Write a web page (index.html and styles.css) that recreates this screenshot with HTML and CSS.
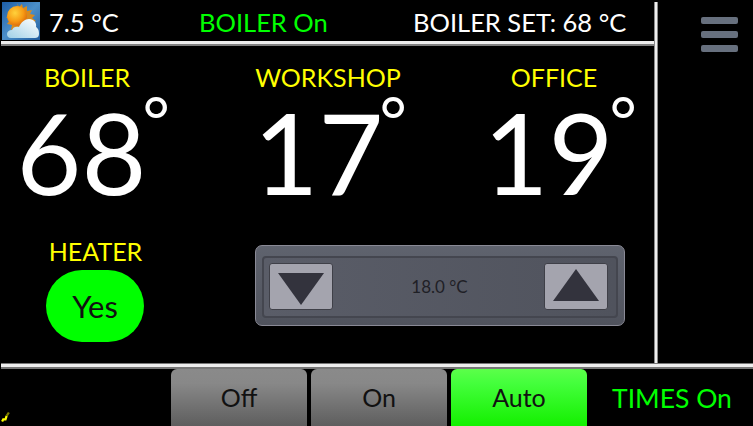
FILE: index.html
```html
<!DOCTYPE html>
<html>
<head>
    <title>Boiler</title>
    <meta charset="UTF-8">
    <link rel="stylesheet" href="styles.css">
</head>
<body>
<div class="screen">
    <div class="upper">
        <div class="main">
            <div class="header">
                <svg class="weather" viewBox="0 0 38 38">
                    <defs>
                        <linearGradient id="sky" x1="0" y1="0" x2="1" y2="1">
                            <stop offset="0" stop-color="#1d5da6"/>
                            <stop offset="0.5" stop-color="#4b8fc9"/>
                            <stop offset="1" stop-color="#1f5b9c"/>
                        </linearGradient>
                        <radialGradient id="sun" cx="0.4" cy="0.35" r="0.7">
                            <stop offset="0" stop-color="#ffd23c"/>
                            <stop offset="0.6" stop-color="#f79a14"/>
                            <stop offset="1" stop-color="#d8640a"/>
                        </radialGradient>
                        <linearGradient id="cloud" x1="1" y1="0" x2="0" y2="1">
                            <stop offset="0" stop-color="#ffffff"/>
                            <stop offset="1" stop-color="#a0d0e6"/>
                        </linearGradient>
                    </defs>
                    <rect width="38" height="38" fill="url(#sky)"/>
                    <path d="M15 1l2 4 3-3 1 4 4-2 0 5 5-1-2 4 5 1-3 3 4 3-4 2 2 4-5 0 0 4-4-2-2 4-3-3-3 3-1-4-5 1 1-5-5-1 3-4-4-3 5-1-1-5 5 1 1-4 3 2z" fill="#d98a1c"/>
                    <circle cx="15" cy="14" r="10" fill="url(#sun)"/>
                    <path d="M9 36C6 36 5 34 5 32C5 30 7 28 10 28C11 25 14 24 17 25C19 20 23 17 27 17C32 17 35 21 34 25C37 27 37 30 37 32C37 35 35 36 33 36Z" fill="url(#cloud)"/>
                </svg>
                <span class="outside">7.5 °C</span>
                <span class="boiler-state">BOILER On</span>
                <span class="boiler-set">BOILER SET: 68 °C</span>
            </div>
            <div class="rule-top"></div>
            <div class="readings">
                <div class="reading">
                    <div class="label">BOILER</div>
                    <div class="temp">68<span class="deg">°</span></div>
                </div>
                <div class="reading">
                    <div class="label">WORKSHOP</div>
                    <div class="temp temp-workshop">17<span class="deg">°</span></div>
                </div>
                <div class="reading">
                    <div class="label">OFFICE</div>
                    <div class="temp">19<span class="deg">°</span></div>
                </div>
            </div>
            <div class="controls">
                <div class="heater">
                    <div class="label">HEATER</div>
                    <div class="pill">Yes</div>
                </div>
                <div class="setpoint">
                    <div class="setpoint-inner">
                        <div class="step step-down"><svg viewBox="0 0 46 32"><path d="M0 0H46L23 32Z"/></svg></div>
                        <span class="setpoint-val">18.0 °C</span>
                        <div class="step step-up"><svg viewBox="0 0 46 32"><path d="M0 32H46L23 0Z"/></svg></div>
                    </div>
                </div>
            </div>
        </div>
        <div class="rule-side"></div>
        <div class="side">
            <div class="burger"><i></i><i></i><i></i></div>
        </div>
    </div>
    <div class="footer">
        <div class="rule-bottom"></div>
        <div class="tabs">
            <svg class="cursor" viewBox="0 0 8 10"><path d="M1 9L2 7 4 7 5 4" stroke="#ffff00" stroke-width="2" fill="none"/><path d="M5 4L7 1" stroke="#808000" stroke-width="2"/></svg>
            <div class="tab">Off</div>
            <div class="tab">On</div>
            <div class="tab tab-on">Auto</div>
            <span class="times">TIMES On</span>
        </div>
    </div>
</div>
</body>
</html>
```

FILE: styles.css
```css
html, body {
    margin: 0;
    background: #000;
}
.screen {
    width: 753px;
    height: 426px;
    overflow: hidden;
    display: flex;
    flex-direction: column;
    font-family: Lato, "Open Sans", sans-serif;
    color: #fff;
    background: #000;
}
.upper {
    display: flex;
    flex: none;
    height: 363px;
    padding-top: 2px;
    box-sizing: border-box;
}
.main {
    width: 653px;
    margin-left: 1px;
    display: flex;
    flex-direction: column;
}
.rule-side {
    width: 4px;
    background: linear-gradient(90deg, #8a8a8a 1px, #eee 1px, #eee 3px, #8a8a8a 3px);
}
.side {
    flex: 1;
    display: flex;
    justify-content: center;
    padding-left: 28px;
}
.burger {
    display: flex;
    flex-direction: column;
    gap: 7px;
    margin-top: 15px;
}
.burger i {
    display: block;
    width: 37px;
    height: 7px;
    border-radius: 2px;
    background: #67707e;
}
.header {
    height: 39px;
    display: flex;
    align-items: center;
    font-size: 25.5px;
    padding-left: 1px;
}
.rule-top {
    height: 5px;
    background: linear-gradient(#eee 3px, #808080 3px);
}
.weather {
    width: 38px;
    height: 38px;
    margin-top: -2px;
}
.outside {
    margin-left: 9px;
    width: 150px;
}
.boiler-state {
    color: #00ff00;
    width: 214px;
}
.boiler-set {
    color: #fff;
}
.readings {
    display: grid;
    grid-template-columns: 172px 310px 142px;
    margin-top: 16px;
}
.reading {
    text-align: center;
}
.label {
    color: #ffff00;
    font-size: 25px;
    line-height: 30px;
}
.temp {
    font-size: 112px;
    line-height: 120px;
    white-space: nowrap;
}
.temp-workshop {
    margin-right: 8px;
}
.deg {
    display: inline-block;
    width: 15px;
    margin-left: -4px;
    font-size: 66px;
    line-height: 0;
    vertical-align: 50px;
    text-align: left;
}
.controls {
    display: flex;
    margin-top: 24px;
}
.heater {
    width: 189px;
    text-align: center;
}
.pill {
    width: 98px;
    height: 72px;
    margin: 4px 0 0 45px;
    border-radius: 36px;
    background: #00ff00;
    color: #111;
    font-size: 31px;
    line-height: 72px;
}
.setpoint {
    width: 370px;
    height: 81px;
    margin-left: 65px;
    margin-top: 9px;
    box-sizing: border-box;
    padding: 10px 6px 7px;
    border-radius: 7px;
    background: linear-gradient(#5f636e, #50535d);
    border: 1px solid #8a8a96;
}
.setpoint-inner {
    height: 100%;
    display: flex;
    align-items: center;
    justify-content: space-between;
    box-sizing: border-box;
    padding: 0 8px 2px 5px;
    border: 2px solid #44464f;
    border-radius: 4px;
    background: linear-gradient(90deg, #5a5d68, #50535d);
}
.step {
    width: 64px;
    height: 47px;
    display: flex;
    align-items: center;
    justify-content: center;
    background: #a4a4ae;
    border: 1px solid #3f4048;
    border-radius: 3px;
    box-sizing: border-box;
}
.step svg {
    width: 46px;
    height: 32px;
    fill: #33333d;
}
.step-down {
    padding-top: 5px;
}
.step-up {
    padding-bottom: 3px;
}
.setpoint-val {
    color: #1f2026;
    font-size: 17px;
    margin-left: 2px;
}
.footer {
    flex: none;
    height: 63px;
    margin-left: 1px;
}
.rule-bottom {
    height: 6px;
    background: linear-gradient(#777 1px, #eee 1px, #eee 4px, #777 4px);
}
.tabs {
    height: 57px;
    display: flex;
    gap: 4px;
    position: relative;
}
.cursor {
    position: absolute;
    left: 0;
    bottom: 3px;
    width: 9px;
    height: 12px;
}
.tab {
    width: 136px;
    border-radius: 6px 6px 0 0;
    background: linear-gradient(#8a8a8a 0, #888 25%, #5e5e5e 100%);
    color: #111;
    font-size: 25px;
    line-height: 57px;
    text-align: center;
}
.tab:first-of-type {
    margin-left: 170px;
}
.tab-on {
    background: linear-gradient(#5cff4a 0, #44ff3c 25%, #14f000 100%);
}
.times {
    color: #00ff00;
    font-size: 26.5px;
    align-self: center;
    margin-left: 21px;
}
```
